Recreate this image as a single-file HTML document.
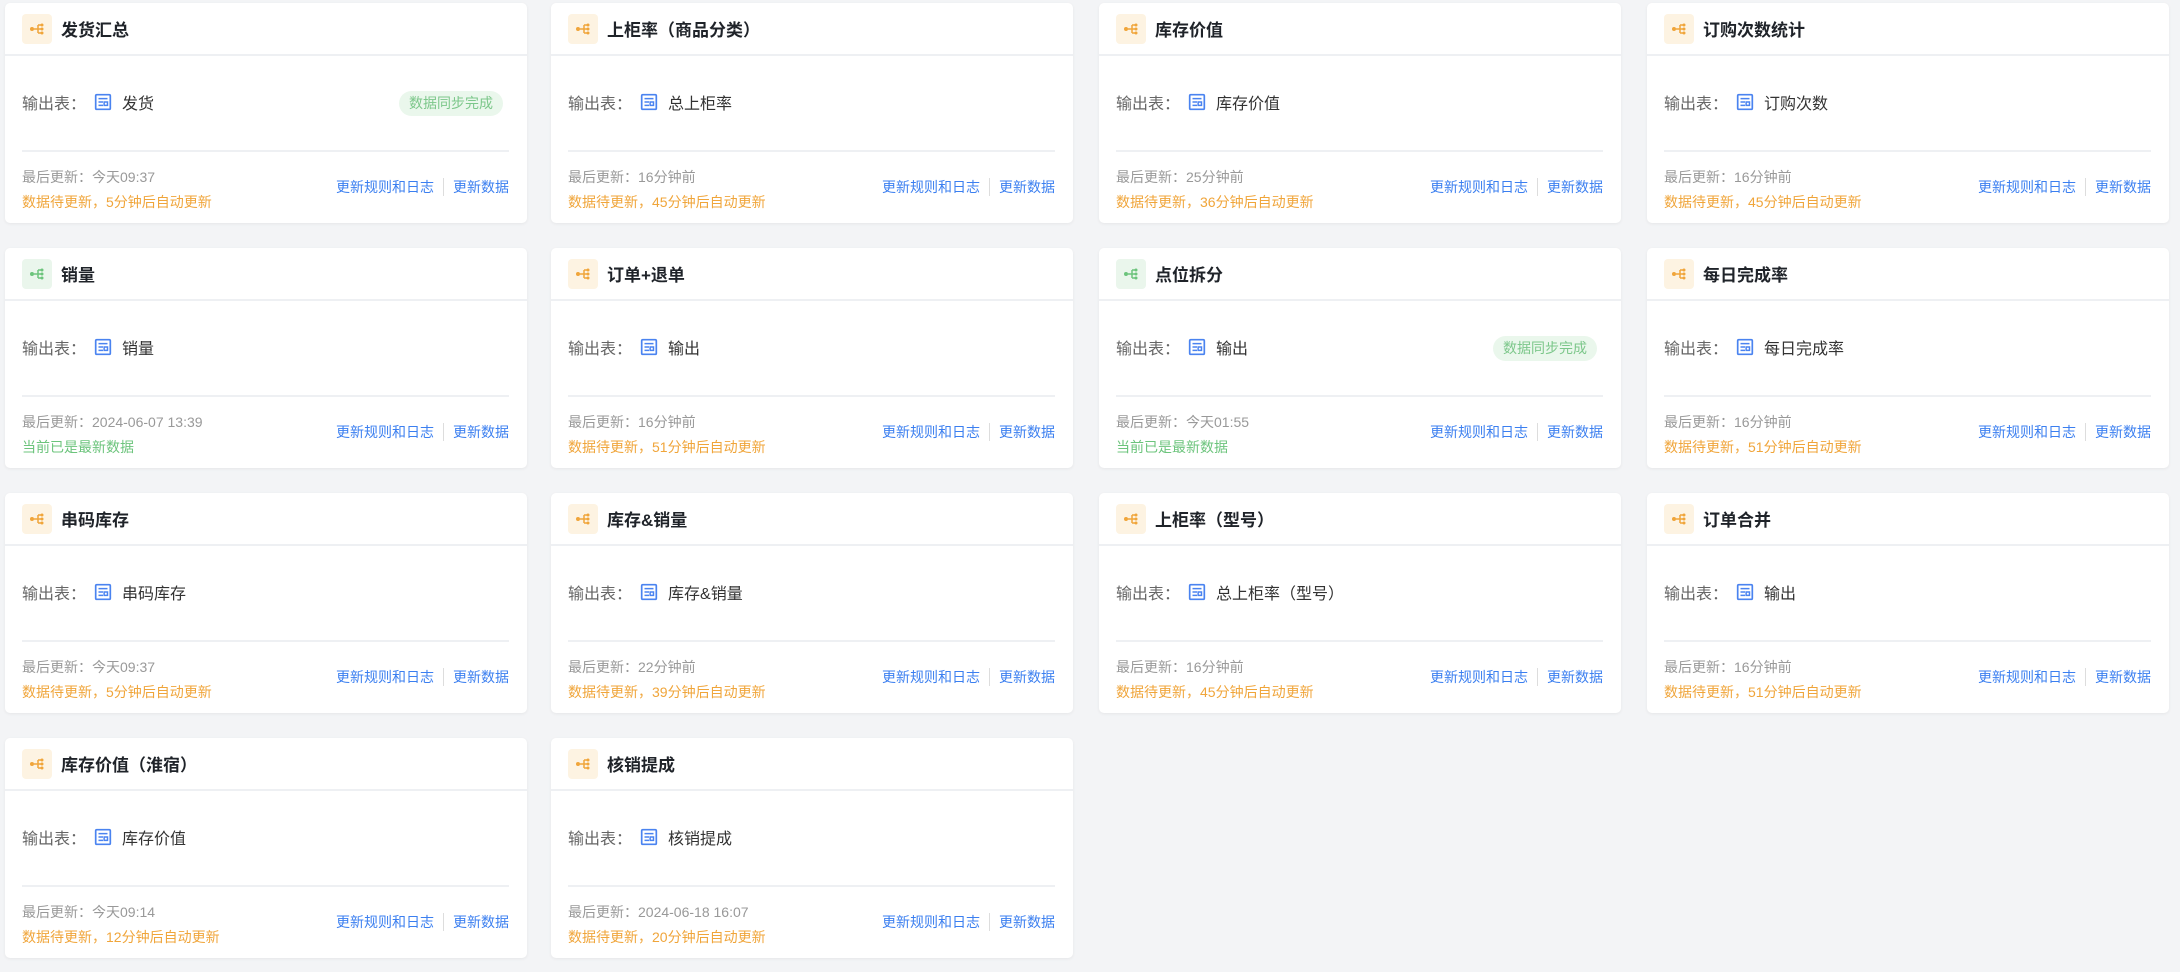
<!DOCTYPE html>
<html><head><meta charset="utf-8"><style>
*{box-sizing:border-box;margin:0;padding:0}
body{width:2180px;height:972px;background:#f3f4f6;font-family:"Liberation Sans","Noto Sans CJK SC",sans-serif;position:relative;overflow:hidden}
.card{position:absolute;width:522px;height:220px;background:#fff;border-radius:5px;box-shadow:0 1px 3px rgba(0,0,0,.06)}
.hd{height:53px;border-bottom:2px solid #eef0f3;display:flex;align-items:center;padding-left:17px}
.ic{width:30px;height:30px;border-radius:4px;background:#fdf3e2;display:flex;align-items:center;justify-content:center;margin-right:9px}
.ic.g{background:#eaf6ec}
.t{font-size:17px;font-weight:bold;color:#1f2329}
.bd{height:96px;margin:0 18px 0 17px;border-bottom:2px solid #eef0f3;display:flex;align-items:center;position:relative;padding-bottom:2px}
.lb{font-size:16px;color:#666}
.tb{margin:0 10px 0 8px;display:flex}
.nm{font-size:16px;color:#333}
.badge{position:absolute;right:6px;top:35px;height:25px;padding:0 10px;border-radius:13px;background:#eaf7ec;color:#7cc78a;font-size:14px;line-height:25px}
.ft{position:relative;margin:0 18px 0 17px;height:68px}
.l1{position:absolute;top:15px;left:0;font-size:14px;color:#999}
.l2{position:absolute;top:40px;left:0;font-size:14px;color:#f0a53a}
.l2.g{color:#6cc47c}
.lk{position:absolute;right:0;top:25px;font-size:14px;color:#3b7ff0;display:flex;align-items:center}
.sep{width:1px;height:18px;background:#ddd;margin:0 9px}
</style></head><body>
<svg width="0" height="0" style="position:absolute"><defs>
<symbol id="sh" viewBox="0 0 16 16"><circle cx="3" cy="8" r="2" fill="currentColor"/><path d="M5 8h4M9 4v8M9 4h3M9 8h3M9 12h3" stroke="currentColor" stroke-width="1.5" fill="none"/><circle cx="13" cy="4" r="1.5" fill="currentColor"/><circle cx="13" cy="8" r="1.5" fill="currentColor"/><circle cx="13" cy="12" r="1.5" fill="currentColor"/></symbol>
<symbol id="tbl" viewBox="0 0 16 16"><rect x="1.5" y="1.5" width="13" height="13" rx="1" stroke="#4a83f0" stroke-width="1.5" fill="none"/><path d="M4 5h8M4 8h4M4 11h4M9 8h3v3h-3z" stroke="#4a83f0" stroke-width="1.3" fill="none"/></symbol>
</defs></svg>
<div id="root"></div>
<script>
const d=[
["发货汇总","发货","今天09:37","数据待更新，5分钟后自动更新",0,1],
["上柜率（商品分类）","总上柜率","16分钟前","数据待更新，45分钟后自动更新",0,0],
["库存价值","库存价值","25分钟前","数据待更新，36分钟后自动更新",0,0],
["订购次数统计","订购次数","16分钟前","数据待更新，45分钟后自动更新",0,0],
["销量","销量","2024-06-07 13:39","当前已是最新数据",1,0],
["订单+退单","输出","16分钟前","数据待更新，51分钟后自动更新",0,0],
["点位拆分","输出","今天01:55","当前已是最新数据",1,1],
["每日完成率","每日完成率","16分钟前","数据待更新，51分钟后自动更新",0,0],
["串码库存","串码库存","今天09:37","数据待更新，5分钟后自动更新",0,0],
["库存&销量","库存&销量","22分钟前","数据待更新，39分钟后自动更新",0,0],
["上柜率（型号）","总上柜率（型号）","16分钟前","数据待更新，45分钟后自动更新",0,0],
["订单合并","输出","16分钟前","数据待更新，51分钟后自动更新",0,0],
["库存价值（淮宿）","库存价值","今天09:14","数据待更新，12分钟后自动更新",0,0],
["核销提成","核销提成","2024-06-18 16:07","数据待更新，20分钟后自动更新",0,0]];
const xs=[5,551,1099,1647],ys=[3,248,493,738];let h="";
d.forEach((c,i)=>{const g=c[4];h+=`<div class="card" style="left:${xs[i%4]}px;top:${ys[Math.floor(i/4)]}px">
<div class="hd"><div class="ic${g?' g':''}"><svg width="16" height="16" style="color:${g?'#6cc47c':'#f0a53a'}"><use href="#sh"/></svg></div><span class="t">${c[0]}</span></div>
<div class="bd"><span class="lb">输出表：</span><span class="tb"><svg width="18" height="18"><use href="#tbl"/></svg></span><span class="nm">${c[1]}</span>${c[5]?'<span class="badge">数据同步完成</span>':''}</div>
<div class="ft"><div class="l1">最后更新：${c[2]}</div><div class="l2${g?' g':''}">${c[3]}</div><div class="lk"><span>更新规则和日志</span><span class="sep"></span><span>更新数据</span></div></div></div>`});
document.getElementById('root').innerHTML=h;
</script>
</body></html>
